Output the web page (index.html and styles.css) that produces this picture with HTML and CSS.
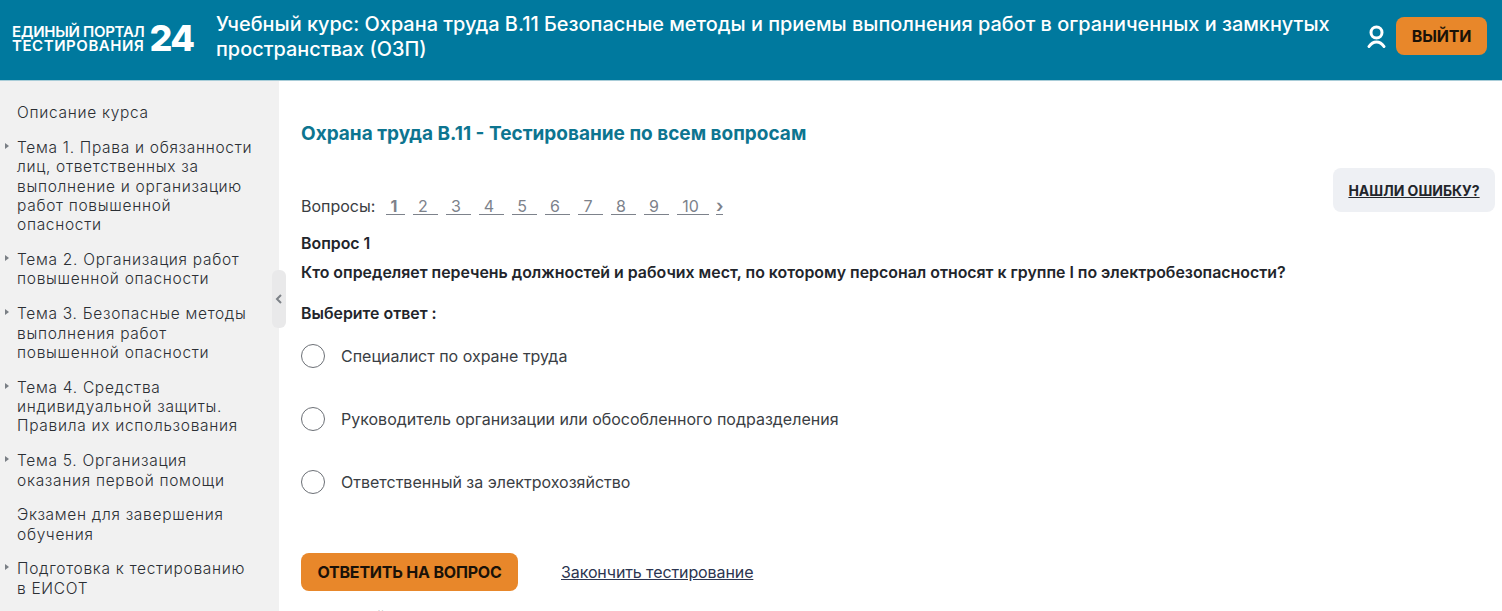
FILE: index.html
```html
<!DOCTYPE html>
<html lang="ru">
<head>
<meta charset="utf-8">
<title>Учебный курс</title>
<link rel="stylesheet" href="styles.css">
</head>
<body>
<header class="top">
  <a class="logo">
    <span class="logo-text"><span class="logo-line">ЕДИНЫЙ ПОРТАЛ</span><span class="logo-line logo-line-wide">ТЕСТИРОВАНИЯ</span></span>
    <span class="logo-num">24</span>
  </a>
  <h1 class="course">Учебный курс: Охрана труда В.11 Безопасные методы и приемы выполнения работ в ограниченных и замкнутых пространствах (ОЗП)</h1>
  <svg class="user" width="19" height="23" viewBox="0 0 19 23" fill="none" stroke="#fff" stroke-width="3"><circle cx="9.500" cy="7.500" r="5.500"/><path d="M2 21.500c2-3 4.500-4.500 7.500-4.500s5.500 1.500 7.500 4.500" stroke-linecap="round"/></svg>
  <button class="btn exit">ВЫЙТИ</button>
</header>
<div class="wrap">
  <nav class="side">
    <ul class="menu">
      <li class="plain">Описание курса</li>
      <li>Тема 1. Права и обязанности лиц, ответственных за выполнение и организацию работ повышенной опасности</li>
      <li>Тема 2. Организация работ повышенной опасности</li>
      <li>Тема 3. Безопасные методы выполнения работ повышенной опасности</li>
      <li>Тема 4. Средства индивидуальной защиты. Правила их использования</li>
      <li>Тема 5. Организация оказания первой помощи</li>
      <li class="plain">Экзамен для завершения обучения</li>
      <li>Подготовка к тестированию в ЕИСОТ</li>
    </ul>
    <div class="collapse"><svg width="8" height="10" viewBox="0 0 8 10" fill="none" stroke="#7d8288" stroke-width="2"><path d="M6 1 2 5l4 4"/></svg></div>
  </nav>
  <main class="content">
    <h2 class="title">Охрана труда В.11 - Тестирование по всем вопросам</h2>
    <a class="report">НАШЛИ ОШИБКУ?</a>
    <div class="pager">
      <span class="pager-label">Вопросы:</span>
      <a class="page cur">1</a><a class="page">2</a><a class="page">3</a><a class="page">4</a><a class="page">5</a><a class="page">6</a><a class="page">7</a><a class="page">8</a><a class="page">9</a><a class="page wide">10</a><a class="next">›</a>
    </div>
    <p class="q-num">Вопрос 1</p>
    <p class="q-text">Кто определяет перечень должностей и рабочих мест, по которому персонал относят к группе I по электробезопасности?</p>
    <p class="choose">Выберите ответ :</p>
    <div class="answers">
      <label class="answer"><span class="radio"></span>Специалист по охране труда</label>
      <label class="answer"><span class="radio"></span>Руководитель организации или обособленного подразделения</label>
      <label class="answer"><span class="radio"></span>Ответственный за электрохозяйство</label>
    </div>
    <div class="actions">
      <button class="btn answer-btn">ОТВЕТИТЬ НА ВОПРОС</button>
      <a class="finish">Закончить тестирование</a>
    </div>
    <p class="progress">На данный момент верных ответов: 0%</p>
  </main>
</div>
</body>
</html>
```
FILE: styles.css
```css
* { box-sizing: border-box; }
html, body { margin: 0; height: 611px; overflow: hidden; background: #fff; }
body { font-family: Inter, "Liberation Sans", sans-serif; color: #22252b; }
.top { height: 81px; background: #00799e; border-bottom: 1px solid #a9cdd8; display: flex; align-items: center; padding: 0 15px 8px 12px; color: #fff; }
.logo { display: flex; align-items: center; width: 204px; flex: none; margin-top: 4px; }
.logo-text { font-size: 15px; font-weight: 600; line-height: 14px; letter-spacing: -0.3px; white-space: nowrap; padding-top: 1px; }
.logo-line { display: block; }
.logo-line-wide { letter-spacing: 0.55px; }
.logo-num { font-size: 36px; font-weight: 800; line-height: 36px; margin-left: 5px; letter-spacing: -1.5px; }
.course { flex: 1; margin: 2px 30px 0 0; font-size: 19.9px; font-weight: 500; line-height: 25px; }
.user { flex: none; margin-right: 10px; }
.btn { border: 0; border-radius: 8px; background: #e8872a; color: #1a1208; font-family: Inter, sans-serif; font-weight: 700; font-size: 16px; letter-spacing: -0.2px; }
.exit { width: 91px; height: 38px; }
.wrap { display: flex; height: 530px; }
.side { width: 279px; flex: none; background: #f1f1f1; position: relative; padding-top: 22px; }
.menu { list-style: none; margin: 0; padding: 0 22px 0 17px; font-size: 15.5px; font-weight: 300; line-height: 19.4px; color: #2b2f34; letter-spacing: 0.7px; }
.menu li { margin-bottom: 15.3px; position: relative; }
.menu li:not(.plain)::before { content: ""; position: absolute; left: -12px; top: 5px; border-left: 4px solid #7a7f85; border-top: 3px solid transparent; border-bottom: 3px solid transparent; }
.collapse { position: absolute; left: 272px; top: 189px; width: 14px; height: 58px; background: #e9e9ea; border-radius: 6px; display: flex; align-items: center; justify-content: center; }
.content { flex: 1; position: relative; padding: 41px 0 0 22px; }
.title { margin: 0; font-size: 19px; font-weight: 700; line-height: 24px; color: #0d7590; }
.report { position: absolute; left: 1054px; top: 87px; width: 162px; height: 44px; background: #eef0f4; border-radius: 8px; display: flex; align-items: center; justify-content: center; font-size: 14px; font-weight: 700; text-decoration: underline; }
.pager { display: flex; align-items: center; margin-top: 49px; height: 22px; font-size: 16px; color: #3a3d42; }
.pager-label { width: 85px; flex: none; }
.page { width: 25px; margin-right: 8px; padding-right: 5px; text-align: center; color: #7d828b; text-decoration: none; border-bottom: 1px solid #7d828b; line-height: 16px; }
.page.cur { width: 19px; font-weight: 700; margin-right: 8px; padding-right: 3px; }
.page.wide { width: 32px; margin-right: 7px; padding-right: 5px; }
.next { font-weight: 600; font-size: 18px; color: #7d828b; line-height: 16px; border-bottom: 1px solid #7d828b; }
.q-num, .choose, .q-text { margin: 0; font-size: 15.9px; font-weight: 600; }
.q-num { margin-top: 17px; line-height: 20px; }
.q-text { margin-top: 9px; line-height: 20px; }
.choose { margin-top: 21px; line-height: 20px; }
.answers { margin-top: 20px; display: flex; flex-direction: column; }
.answer { display: flex; align-items: center; height: 24px; margin-bottom: 39px; font-size: 16px; color: #3a3e44; }
.radio { width: 24px; height: 24px; border: 1px solid #6c7076; border-radius: 50%; margin-right: 16px; flex: none; background: #fff; }
.actions { display: flex; align-items: center; margin-top: 20px; }
.answer-btn { width: 217px; height: 38px; }
.finish { margin-left: 43px; font-size: 16px; color: #2c3550; text-decoration: underline; letter-spacing: -0.1px; }
.progress { margin: 16px 0 0; font-size: 16px; line-height: 20px; }
```
